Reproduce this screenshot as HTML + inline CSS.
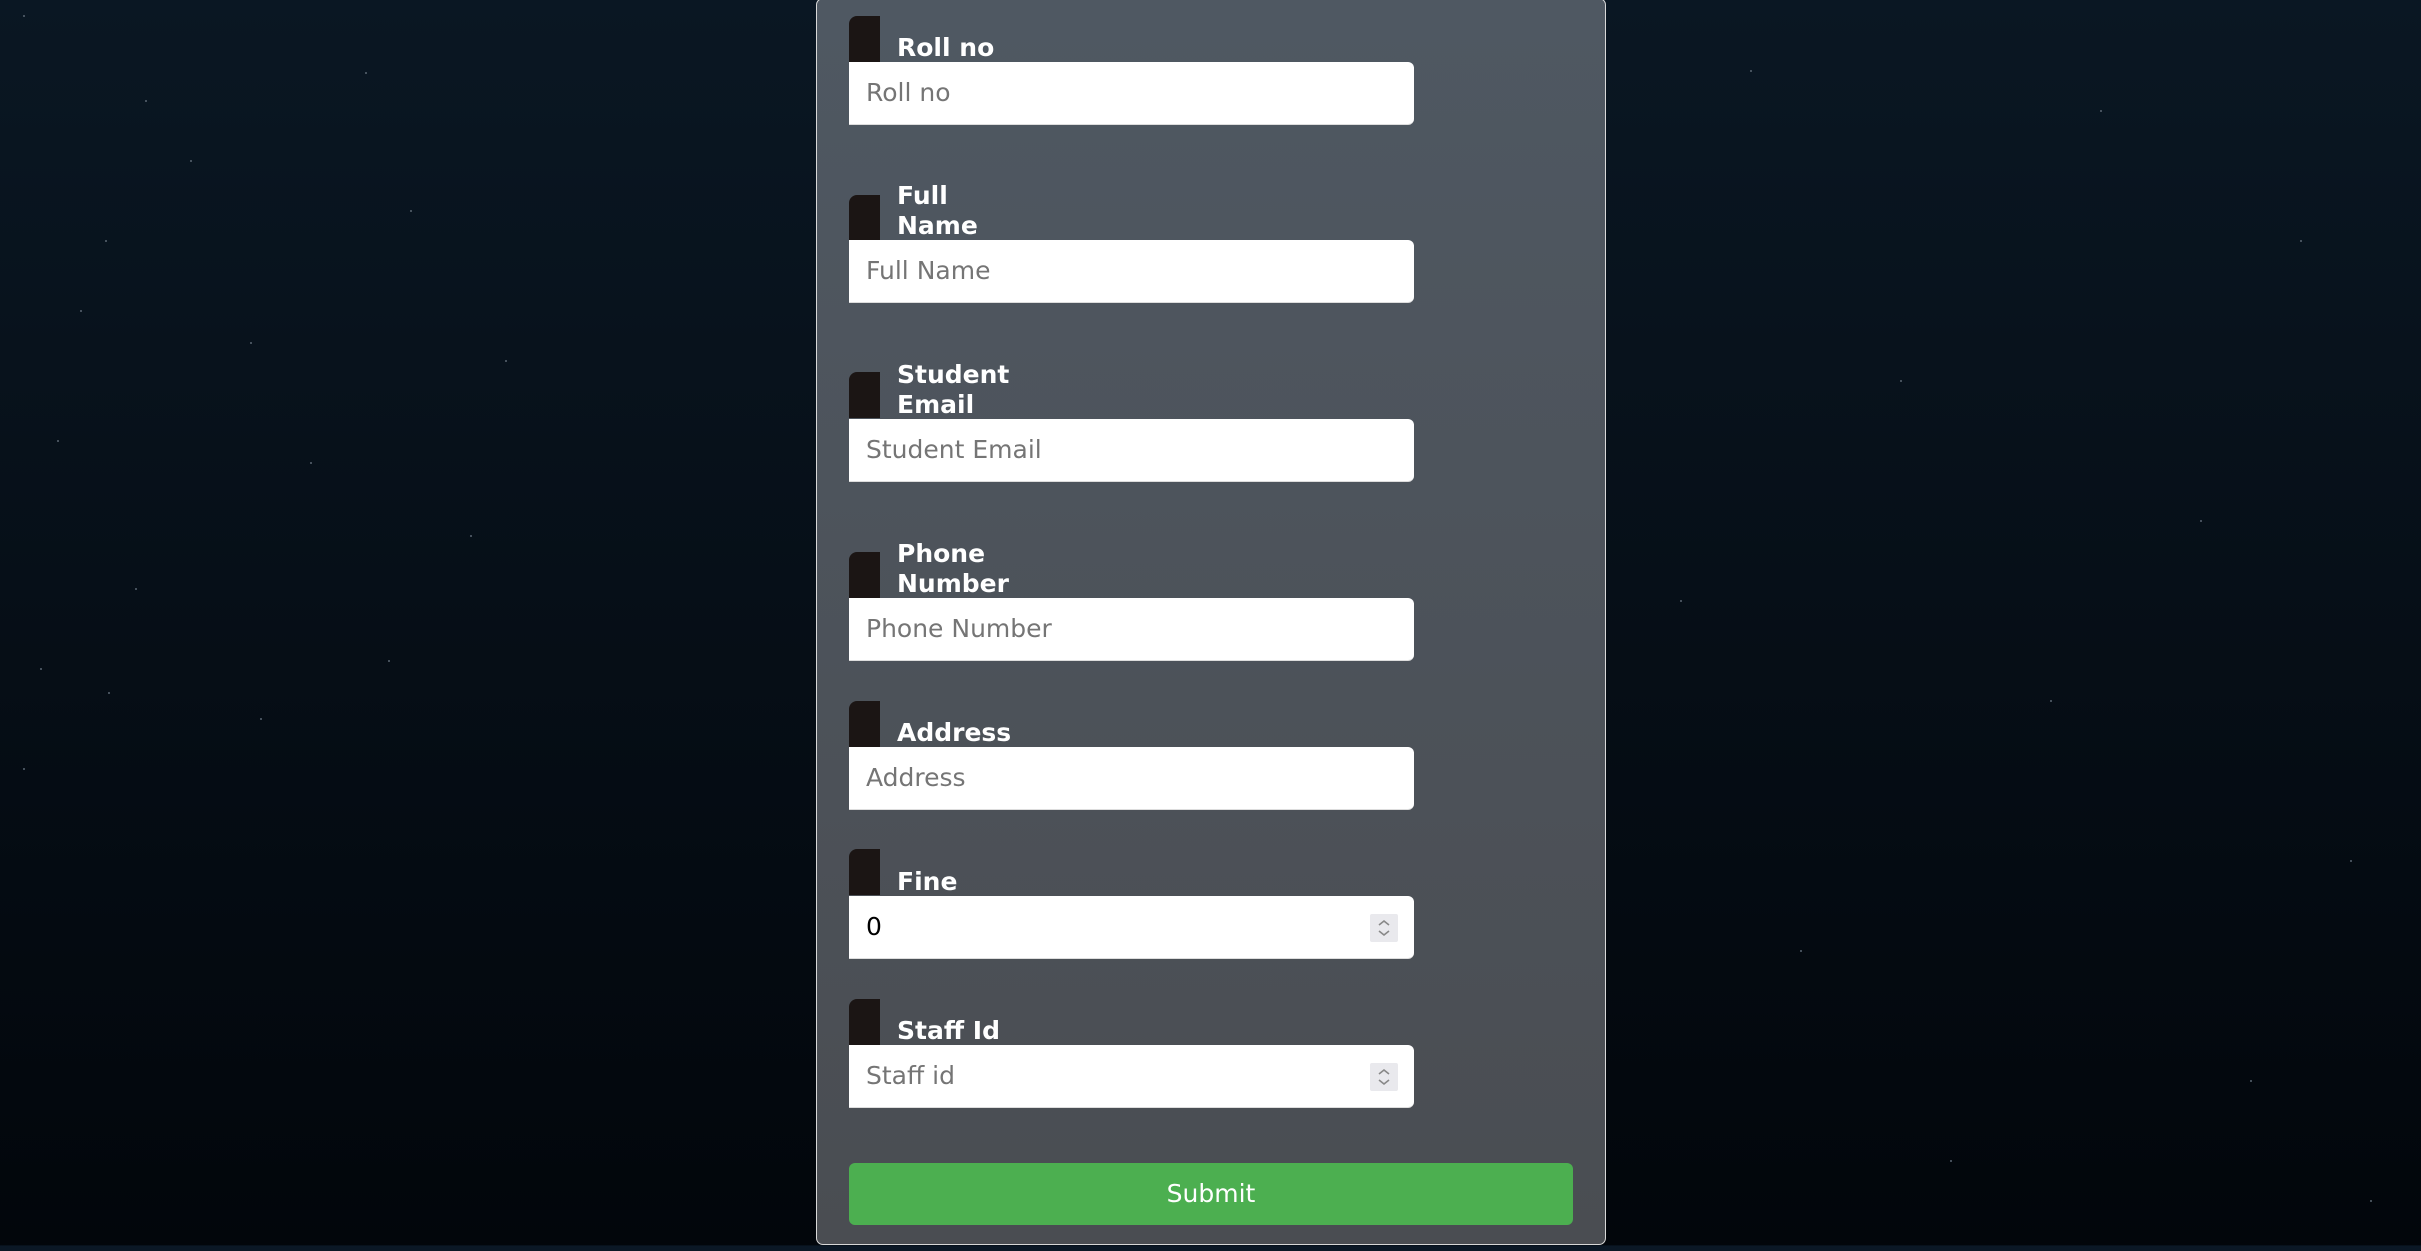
<!DOCTYPE html>
<html><head><meta charset="utf-8"><style>
html,body{margin:0;padding:0}
body{width:2421px;height:1251px;overflow:hidden;position:relative;background:linear-gradient(#0a1723,#02060b 99.5%,#0b1826 99.6%);font-family:"DejaVu Sans","Liberation Sans",sans-serif}
.star{position:absolute;width:2px;height:2px;background:#5a6672;border-radius:1px}
.card{position:absolute;left:816px;top:-2px;width:788px;height:1245px;border:1px solid #d8d8d8;border-radius:7px;background:linear-gradient(#4f5862,#4a4d52)}
.tab{position:absolute;left:849px;width:31px;height:46px;background:#1b1514;border-radius:8px 0 0 0}
.lab{position:absolute;left:897px;color:#fff;font-weight:bold;font-size:25px;line-height:30px;width:150px}
.in{position:absolute;left:849px;width:565px;height:63px;background:#fff;border-radius:0 6px 6px 0;box-sizing:border-box;border-bottom:1px solid #ddd}
.in span{position:absolute;left:17px;top:0;line-height:62px;font-size:25px;color:#757575}
.in span.v{color:#000}
.sp{position:absolute;left:521px;top:18px;width:28px;height:28px;background:#e9e9ed;border-radius:2px}
.btn{position:absolute;left:849px;top:1163px;width:724px;height:62px;background:#4caf50;border-radius:6px;color:#fff;font-size:25px;line-height:62px;text-align:center}
</style></head><body>
<div class="star" style="left:23px;top:15px"></div><div class="star" style="left:145px;top:100px"></div>
<div class="star" style="left:365px;top:72px"></div><div class="star" style="left:190px;top:160px"></div>
<div class="star" style="left:410px;top:210px"></div><div class="star" style="left:105px;top:240px"></div>
<div class="star" style="left:80px;top:310px"></div><div class="star" style="left:250px;top:342px"></div>
<div class="star" style="left:505px;top:360px"></div><div class="star" style="left:57px;top:440px"></div>
<div class="star" style="left:310px;top:462px"></div><div class="star" style="left:470px;top:535px"></div>
<div class="star" style="left:135px;top:588px"></div><div class="star" style="left:388px;top:660px"></div>
<div class="star" style="left:40px;top:668px"></div><div class="star" style="left:260px;top:718px"></div>
<div class="star" style="left:108px;top:692px"></div><div class="star" style="left:23px;top:768px"></div>
<div class="star" style="left:1750px;top:70px"></div><div class="star" style="left:2100px;top:110px"></div>
<div class="star" style="left:2300px;top:240px"></div><div class="star" style="left:1900px;top:380px"></div>
<div class="star" style="left:2200px;top:520px"></div><div class="star" style="left:1680px;top:600px"></div>
<div class="star" style="left:2050px;top:700px"></div><div class="star" style="left:2350px;top:860px"></div>
<div class="star" style="left:1800px;top:950px"></div><div class="star" style="left:2250px;top:1080px"></div>
<div class="star" style="left:1950px;top:1160px"></div><div class="star" style="left:2370px;top:1200px"></div>
<div class="card"></div>

<div class="tab" style="top:16px"></div><div class="lab" style="bottom:1188px">Roll no</div>
<div class="in" style="top:62px"><span>Roll no</span></div>

<div class="tab" style="top:195px"></div><div class="lab" style="bottom:1010px">Full<br>Name</div>
<div class="in" style="top:240px"><span>Full Name</span></div>

<div class="tab" style="top:372px"></div><div class="lab" style="bottom:831px">Student<br>Email</div>
<div class="in" style="top:419px"><span>Student Email</span></div>

<div class="tab" style="top:552px"></div><div class="lab" style="bottom:652px">Phone<br>Number</div>
<div class="in" style="top:598px"><span>Phone Number</span></div>

<div class="tab" style="top:701px"></div><div class="lab" style="bottom:503px">Address</div>
<div class="in" style="top:747px"><span>Address</span></div>

<div class="tab" style="top:849px"></div><div class="lab" style="bottom:354px">Fine</div>
<div class="in" style="top:896px"><span class="v">0</span><div class="sp"><svg width="28" height="28" viewBox="0 0 28 28"><path d="M9 11l5-4 5 4M9 17l5 4 5-4" stroke="#888" stroke-width="1.6" fill="none"/></svg></div></div>

<div class="tab" style="top:999px"></div><div class="lab" style="bottom:205px">Staff Id</div>
<div class="in" style="top:1045px"><span>Staff id</span><div class="sp"><svg width="28" height="28" viewBox="0 0 28 28"><path d="M9 11l5-4 5 4M9 17l5 4 5-4" stroke="#888" stroke-width="1.6" fill="none"/></svg></div></div>

<div class="btn">Submit</div>
</body></html>
